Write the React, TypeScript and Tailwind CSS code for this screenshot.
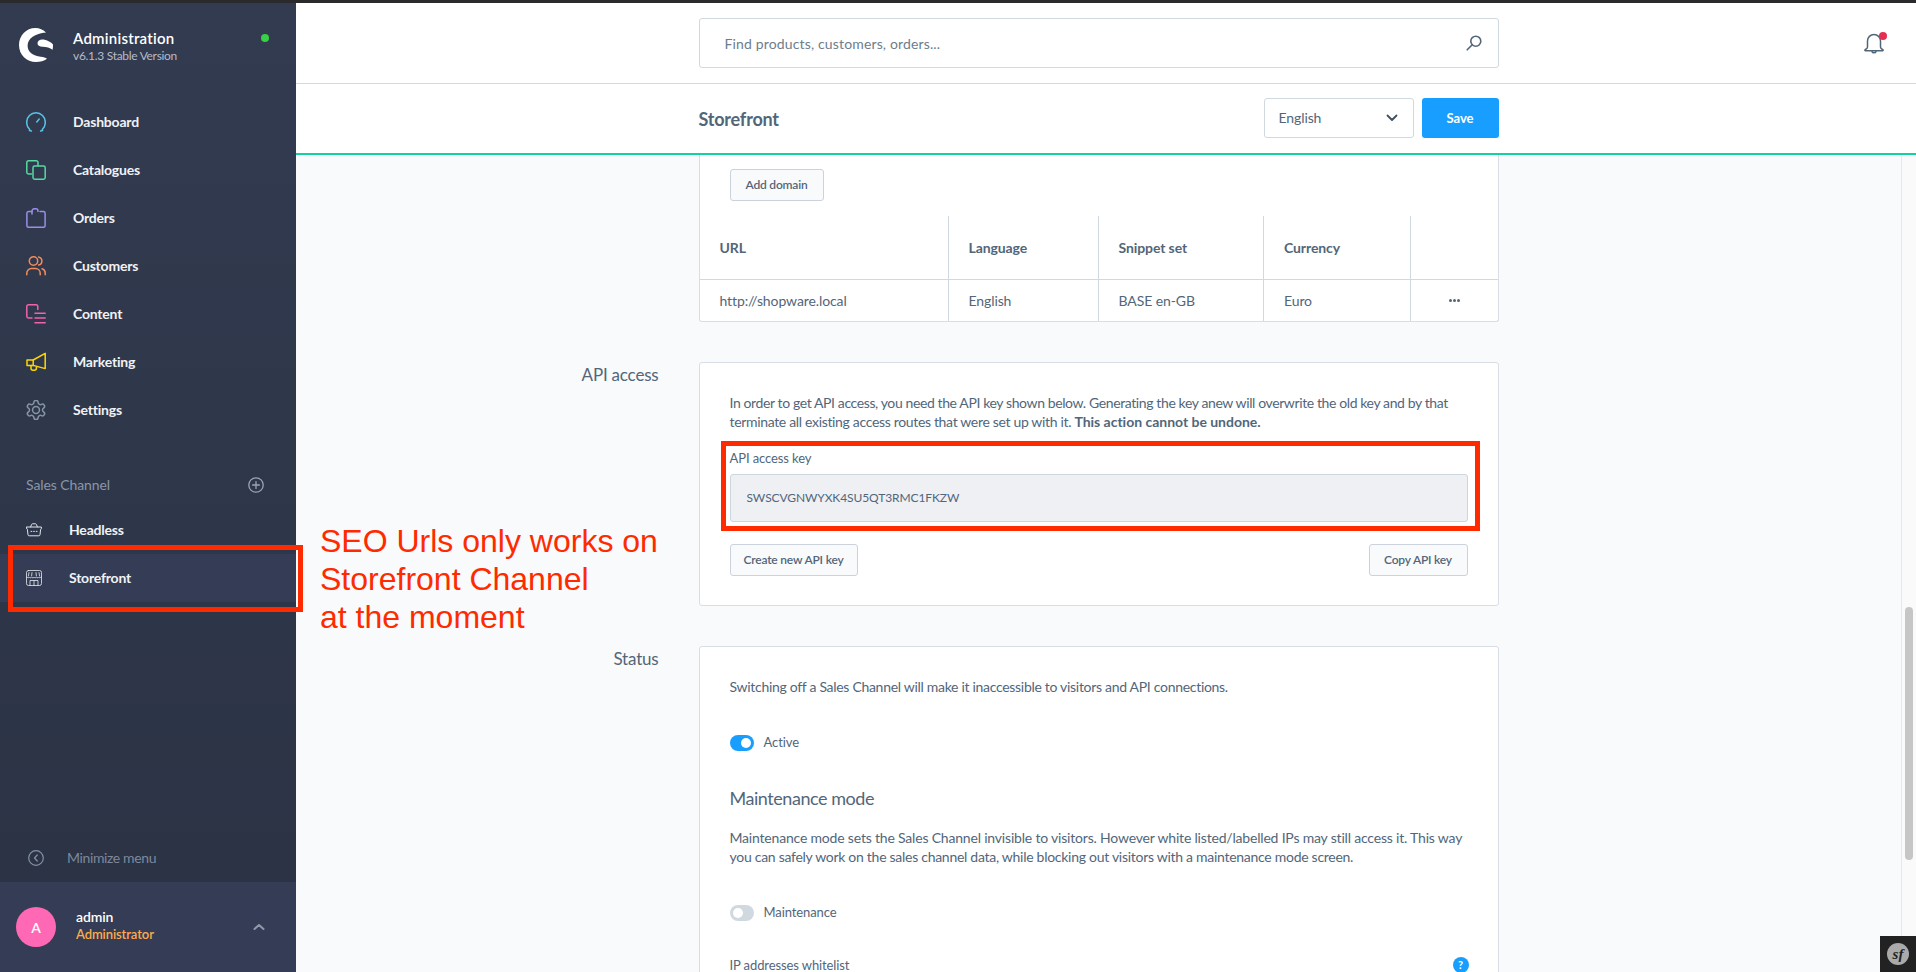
import React from "react";

const FONT = "font-['Lato','Noto_Sans',sans-serif]";

const Logo = () => (
  <svg width="34" height="34" viewBox="0 0 34 34" fill="#ffffff">
    <path d="M27 4.5C24 1.6 20.5 0 16.5 0C7 0 0 7.6 0 17C0 27 7.6 34 17 34C21.2 34 25 33 28 30.8C26.6 29.6 24.6 29.2 21.8 28.8C14 27.6 8.6 24.4 8.6 17.6C8.6 10.4 16 5.4 27 4.5Z" />
    <path d="M18.5 15.2C18.5 12.4 21.6 11 24.6 11.6C28.6 12.4 32.2 14.2 34 16.4C34 18 33.9 20 33.6 21.8C31 19.6 27.4 19.2 23.6 18.8C20.4 18.4 18.5 17.4 18.5 15.2Z" />
  </svg>
);

const stroke = {
  fill: "none",
  strokeWidth: 1.5,
  strokeLinecap: "round" as const,
  strokeLinejoin: "round" as const,
};

const GaugeIcon = () => (
  <svg width="20" height="20" viewBox="0 0 20 20" stroke="#57c4e5" {...stroke}>
    <path d="M3.6 17.4C1.6 15.6.7 13 .7 10.4C.7 5 5 .8 10 .8s9.3 4.2 9.3 9.600c0 2.600-.9 5.200-2.900 7" />
    <path d="M3.400 18.600l2 .4M16.600 18.600l-2 .4M13.200 7l-2.400 3" />
  </svg>
);
const CataloguesIcon = () => (
  <svg width="20" height="20" viewBox="0 0 20 20" stroke="#57d9a3" {...stroke}>
    <path d="M5.500 14H2.500A1.700 1.700 0 0 1 .8 12.300V2.500A1.700 1.700 0 0 1 2.500.8h7.800A1.700 1.700 0 0 1 12 2.500V5.500" />
    <rect x="7" y="6" width="12.200" height="13.200" rx="1.700" />
  </svg>
);
const OrdersIcon = () => (
  <svg width="20" height="20" viewBox="0 0 20 20" stroke="#9a8ee8" {...stroke}>
    <path d="M6 3.500H2.600A1.700 1.700 0 0 0 .9 5.200v12.400a1.700 1.700 0 0 0 1.700 1.700h14.800a1.700 1.700 0 0 0 1.700-1.700V5.200a1.700 1.700 0 0 0-1.700-1.700H14" />
    <path d="M6 6V3a2.200 2.200 0 0 1 2.200-2.200h1.600A2.200 2.200 0 0 1 12 3v.5" />
  </svg>
);
const CustomersIcon = () => (
  <svg width="20" height="20" viewBox="0 0 20 20" stroke="#f58b5b" {...stroke}>
    <circle cx="7.500" cy="5" r="4.200" />
    <path d="M.8 18.800v-1.600a4.600 4.600 0 0 1 4.600-4.600h4.200a4.600 4.600 0 0 1 4.600 4.600v1.600" />
    <path d="M12.600.9a4.200 4.200 0 0 1 0 8.200M16 12.800a4.400 4.400 0 0 1 3.200 4.200v1.800" />
  </svg>
);
const ContentIcon = () => (
  <svg width="20" height="20" viewBox="0 0 20 20" stroke="#f163ab" {...stroke}>
    <path d="M11.800 5.500V2.500A1.700 1.700 0 0 0 10.100.8H2.500A1.700 1.700 0 0 0 .8 2.500v9.800A1.700 1.700 0 0 0 2.500 14H6" />
    <path d="M9 9.200h10.200M9 14h10.200M9 18.800h10.200" />
  </svg>
);
const MarketingIcon = () => (
  <svg width="20" height="20" viewBox="0 0 20 20" stroke="#ffd700" {...stroke}>
    <path d="M19.200 1.400v15.200L7.200 13.400H1V8h6.200z" />
    <path d="M7.200 8v5.400M5 13.600v2.600a2 2 0 0 0 2 2h1.400a2 2 0 0 0 2-2v-1" />
  </svg>
);
const SettingsIcon = () => (
  <svg width="20" height="20" viewBox="1.500 1.500 21 21" stroke="#8794a7" {...stroke} strokeWidth={1.6}>
    <path d="M12.220 2h-.44a2 2 0 0 0-2 2v.18a2 2 0 0 1-1 1.730l-.43.25a2 2 0 0 1-2 0l-.15-.08a2 2 0 0 0-2.730.73l-.22.38a2 2 0 0 0 .73 2.730l.15.1a2 2 0 0 1 1 1.720v.51a2 2 0 0 1-1 1.740l-.15.09a2 2 0 0 0-.73 2.730l.22.38a2 2 0 0 0 2.730.73l.15-.08a2 2 0 0 1 2 0l.43.25a2 2 0 0 1 1 1.730V20a2 2 0 0 0 2 2h.44a2 2 0 0 0 2-2v-.18a2 2 0 0 1 1-1.730l.43-.25a2 2 0 0 1 2 0l.15.08a2 2 0 0 0 2.730-.73l.22-.39a2 2 0 0 0-.73-2.730l-.15-.08a2 2 0 0 1-1-1.740v-.5a2 2 0 0 1 1-1.740l.15-.09a2 2 0 0 0 .73-2.730l-.22-.38a2 2 0 0 0-2.730-.73l-.15.08a2 2 0 0 1-2 0l-.43-.25a2 2 0 0 1-1-1.730V4a2 2 0 0 0-2-2z" />
    <circle cx="12" cy="12" r="3.600" />
  </svg>
);
const BasketIcon = () => (
  <svg width="16" height="16" viewBox="0 0 16 16" stroke="#dfe4ea" {...stroke} strokeWidth={1}>
    <path d="M.6 5h14.800v1.400a1 1 0 0 1-.8 1l-.6 5.400a1.200 1.200 0 0 1-1.200 1H3.200a1.200 1.200 0 0 1-1.200-1l-.6-5.400a1 1 0 0 1-.8-1z" />
    <path d="M4.600 5l1-2.600a1 1 0 0 1 .9-.6h3a1 1 0 0 1 .9.6l1 2.600M5 9.400h.8M7.600 9.400h.8M10.200 9.400h.8" />
  </svg>
);
const StoreIcon = () => (
  <svg width="16" height="16" viewBox="0 0 16 16" stroke="#e6eaef" {...stroke} strokeWidth={0.8}>
    <rect x=".5" y=".5" width="15" height="15" rx="2" />
    <path d="M.8 7c1.200 1 2 1 2.400 0 .5 1 1.900 1 2.400 0 .5 1 1.900 1 2.400 0 .5 1 1.900 1 2.400 0 .5 1 1.900 1 2.400 0 .5 1 1.300 1 2.400 0" />
    <path d="M3 2.600L2.400 6M6 2.600L5.600 6M10 2.600L10.400 6M13 2.600L13.600 6" />
    <path d="M4 15.500V10.500h8v5M8 10.500v5" />
  </svg>
);

const navItems = [
  { label: "Dashboard", icon: <GaugeIcon /> },
  { label: "Catalogues", icon: <CataloguesIcon /> },
  { label: "Orders", icon: <OrdersIcon /> },
  { label: "Customers", icon: <CustomersIcon /> },
  { label: "Content", icon: <ContentIcon /> },
  { label: "Marketing", icon: <MarketingIcon /> },
  { label: "Settings", icon: <SettingsIcon /> },
];

const Sidebar = () => (
  <aside className="w-[296px] shrink-0 flex flex-col bg-gradient-to-b from-[#323b50] to-[#2b3244] text-white">
    <div className="h-[95px] shrink-0 flex items-start pl-[19px] pt-[25px]">
      <Logo />
      <div className="ml-[20px] -mt-[1px]">
        <div className="text-[15px] leading-[22px] font-semibold tracking-[0.25px]">Administration</div>
        <div className="text-[12px] leading-[14px] text-[#b4bcc9] tracking-[-0.3px]">v6.1.3 Stable Version</div>
      </div>
      <span className="ml-[84px] mt-[6px] w-2 h-2 rounded-full bg-[#37d046]" />
    </div>
    <nav className="flex flex-col">
      {navItems.map((item) => (
        <div key={item.label} className="h-12 flex items-center pl-[26px]">
          {item.icon}
          <span className="ml-[27px] pb-[2px] text-[14px] font-bold tracking-[-0.2px] text-[#f0f2f5]">{item.label}</span>
        </div>
      ))}
    </nav>
    <div className="mt-[39px] mb-[9px] h-6 flex items-center justify-between pl-[26px] pr-[32px]">
      <span className="pb-[2px] text-[14px] text-[#8a96a8] tracking-[-0.1px]">Sales Channel</span>
      <svg width="16" height="16" viewBox="0 0 16 16" stroke="#9aa5b5" {...stroke} strokeWidth={1.3}>
        <circle cx="8" cy="8" r="7.200" />
        <path d="M8 4.600v6.800M4.600 8h6.800" />
      </svg>
    </div>
    <div className="h-12 flex items-center pl-[26px]">
      <BasketIcon />
      <span className="ml-[27px] pb-[2px] text-[14px] font-bold tracking-[-0.2px] text-[#f0f2f5]">Headless</span>
    </div>
    <div className="h-12 flex items-center pl-[26px] bg-[#343d55]">
      <StoreIcon />
      <span className="ml-[27px] pb-[2px] text-[14px] font-bold tracking-[-0.2px] text-[#f0f2f5]">Storefront</span>
    </div>
    <div className="flex-1" />
    <div className="h-12 shrink-0 flex items-center pl-[28px]">
      <svg width="16" height="16" viewBox="0 0 16 16" stroke="#8592a5" {...stroke} strokeWidth={1.2}>
        <circle cx="8" cy="8" r="7.300" />
        <path d="M9.300 5L6.500 8l2.800 3" />
      </svg>
      <span className="ml-[23px] pb-[2px] text-[14px] text-[#7c899c] tracking-[-0.38px]">Minimize menu</span>
    </div>
    <div className="h-[90px] shrink-0 flex items-center bg-[#343d55] pl-4 pr-[31px]">
      <div className="w-10 h-10 rounded-full bg-[#ff68b4] flex items-center justify-center text-[14px] font-semibold">A</div>
      <div className="ml-5 flex-1 pb-[3px]">
        <div className="text-[14px] leading-[18px] font-semibold tracking-[-0.1px]">admin</div>
        <div className="text-[13px] leading-[17px] font-semibold text-[#ffab4a] tracking-[-0.1px]">Administrator</div>
      </div>
      <svg width="12" height="8" viewBox="0 0 12 8" stroke="#8e9aac" {...stroke} strokeWidth={2}>
        <path d="M1.500 6L6 2l4.500 4" />
      </svg>
    </div>
  </aside>
);

const OutlineButton = ({ label, className }: { label: string; className: string }) => (
  <button className={`h-8 bg-[#f9fafb] border border-[#cbd2dc] rounded-[3px] text-[12px] font-semibold text-[#52667a] tracking-[-0.2px] ${className}`}>
    {label}
  </button>
);

const Toggle = ({ on, label }: { on: boolean; label: string }) => (
  <div className="flex items-center h-4">
    <span className={`w-6 h-4 rounded-full flex items-center px-[3px] ${on ? "bg-[#189eff] justify-end" : "bg-[#d1d9e0] justify-start"}`}>
      <span className="w-[10px] h-[10px] rounded-full bg-white" />
    </span>
    <span className="ml-[10px] text-[13px] text-[#52667a] tracking-[-0.1px]">{label}</span>
  </div>
);

const domainCols = "grid grid-cols-[249px_150px_165.500px_147px_1fr]";

const DomainCard = () => (
  <div className="bg-white border-x border-b border-[#d9dde5] rounded-b-[3px]">
    <div className="pl-[30px] pt-[14px] pb-[15px]">
      <OutlineButton label="Add domain" className="w-[94px]" />
    </div>
    <div className={`${domainCols} h-[64px] border-b border-[#d1d9e0] text-[14px] font-bold text-[#52667a] tracking-[-0.1px]`}>
      <div className="border-r border-[#d1d9e0] pl-5 flex items-center">URL</div>
      <div className="border-r border-[#d1d9e0] pl-5 flex items-center">Language</div>
      <div className="border-r border-[#d1d9e0] pl-5 flex items-center">Snippet set</div>
      <div className="border-r border-[#d1d9e0] pl-5 flex items-center">Currency</div>
      <div />
    </div>
    <div className={`${domainCols} h-[41px] text-[14px] text-[#52667a] tracking-[-0.1px]`}>
      <div className="border-r border-[#d1d9e0] pl-5 flex items-center">http://shopware.local</div>
      <div className="border-r border-[#d1d9e0] pl-5 flex items-center">English</div>
      <div className="border-r border-[#d1d9e0] pl-5 flex items-center">BASE en-GB</div>
      <div className="border-r border-[#d1d9e0] pl-5 flex items-center">Euro</div>
      <div className="flex items-center justify-center gap-[1px]">
        <span className="w-[3px] h-[3px] rounded-full bg-[#52667a]" />
        <span className="w-[3px] h-[3px] rounded-full bg-[#52667a]" />
        <span className="w-[3px] h-[3px] rounded-full bg-[#52667a]" />
      </div>
    </div>
  </div>
);

const ApiCard = () => (
  <div className="relative bg-white border border-[#d9dde5] rounded-[3px] h-[244px] px-[30px] pt-[30px]">
    <p className="text-[14px] leading-[19px] text-[#52667a] whitespace-nowrap">
      <span className="tracking-[-0.39px]">
        In order to get API access, you need the API key shown below. Generating the key anew will overwrite the old key and by that
      </span>
      <br />
      <span className="tracking-[-0.33px]">terminate all existing access routes that were set up with it. </span>
      <b className="font-bold tracking-[-0.02px]">This action cannot be undone.</b>
    </p>
    <div className="mt-[19px] text-[13px] leading-[16px] text-[#52667a] tracking-[-0.1px]">API access key</div>
    <div className="mt-[8px] h-12 bg-[#eef0f4] border border-[#cdd5de] rounded-[3px] flex items-center pl-4 text-[12px] text-[#52667a] tracking-[-0.1px]">
      SWSCVGNWYXK4SU5QT3RMC1FKZW
    </div>
    <div className="mt-[22px] flex justify-between">
      <OutlineButton label="Create new API key" className="w-[128px]" />
      <OutlineButton label="Copy API key" className="w-[99px]" />
    </div>
    {/* annotation around the key field */}
    <div className="absolute left-[21px] top-[78px] w-[759px] h-[90px] border-[5px] border-[#ff2a00]" />
  </div>
);

const StatusCard = () => (
  <div className="bg-white border border-[#d9dde5] rounded-t-[3px] px-[30px] pt-[30px] pb-10">
    <p className="text-[14px] leading-[19px] text-[#52667a] tracking-[-0.3px]">
      Switching off a Sales Channel will make it inaccessible to visitors and API connections.
    </p>
    <div className="mt-[39px]">
      <Toggle on label="Active" />
    </div>
    <h3 className="mt-[35px] text-[18px] leading-[24px] font-normal text-[#52667a] tracking-[-0.45px]">Maintenance mode</h3>
    <p className="mt-[18px] text-[14px] leading-[19px] text-[#52667a] whitespace-nowrap">
      <span className="tracking-[-0.19px]">
        Maintenance mode sets the Sales Channel invisible to visitors. However white listed/labelled IPs may still access it. This way
      </span>
      <br />
      <span className="tracking-[-0.28px]">
        you can safely work on the sales channel data, while blocking out visitors with a maintenance mode screen.
      </span>
    </p>
    <div className="mt-[39px]">
      <Toggle on={false} label="Maintenance" />
    </div>
    <div className="mt-[35px] flex items-center justify-between text-[13px] leading-[18px] text-[#52667a] tracking-[-0.1px]">
      <span>IP addresses whitelist</span>
      <span className="w-4 h-4 -mr-[1px] rounded-full bg-[#189eff] text-white text-[11px] font-bold flex items-center justify-center">?</span>
    </div>
  </div>
);

const SectionLabel = ({ children }: { children: string }) => (
  <div className="pr-[40px] pt-[2px] text-right text-[17px] leading-[22px] text-[#52667a] tracking-[-0.2px]">{children}</div>
);

const App = () => (
  <div className={`relative h-screen w-full overflow-hidden flex flex-col bg-white ${FONT}`}>
    <div className="h-[3px] shrink-0 bg-[#2a2a2c]" />
    <div className="flex flex-1 min-h-0">
      <Sidebar />
      <main className="flex-1 min-w-0 flex flex-col">
        <header className="h-[81px] shrink-0 border-b border-[#d9d9d9] relative flex items-start justify-center pr-[15px]">
          <div className="mt-[15px] w-[800px] h-[50px] border border-[#d1d9e0] rounded-[3px] flex items-center justify-between pl-[25px] pr-[16px]">
            <span className="text-[14px] text-[#6d7d8e] tracking-[0.15px]">Find products, customers, orders...</span>
            <svg width="16" height="16" viewBox="0 0 16 16" stroke="#52667a" {...stroke} strokeWidth={1.6}>
              <circle cx="9.800" cy="6.200" r="5" />
              <path d="M6.200 9.800L1.200 14.800" />
            </svg>
          </div>
          {/* notification bell */}
          <div className="absolute right-[32px] top-[29px] w-5 h-[23px]">
            <svg width="20" height="23" viewBox="0 0 20 23" stroke="#52667a" {...stroke} strokeWidth={1.5}>
              <path d="M3.500 15V9a6.500 6.500 0 0 1 13 0v6c0 1.500 1.200 2 2.500 2.800a.6.6 0 0 1-.3 1H1.300a.6.6 0 0 1-.3-1C2.300 17 3.500 16.500 3.500 15z" />
              <path d="M8 19.500c.4 1.800 3.600 1.800 4 0" />
            </svg>
            <span className="absolute right-[-3px] top-0 w-2 h-2 rounded-full bg-[#e52e52]" />
          </div>
        </header>
        <div className="h-[71px] shrink-0 border-b-2 border-[#14d1a4] flex justify-center pr-[15px]">
          <div className="w-[800px] flex items-center justify-between pb-[2px]">
            <h1 className="pt-[3px] text-[18px] font-bold text-[#52667a] tracking-[-0.2px]">Storefront</h1>
            <div className="flex gap-[8px]">
              <div className="w-[150px] h-10 border border-[#d1d9e0] rounded-[3px] flex items-center justify-between pl-[14px] pr-[15px] text-[14px] text-[#52667a] tracking-[-0.1px]">
                English
                <svg width="12" height="8" viewBox="0 0 12 8" stroke="#3f4f60" {...stroke} strokeWidth={1.8}>
                  <path d="M1.500 1.500L6 6l4.500-4.500" />
                </svg>
              </div>
              <button className="w-[77px] h-10 bg-[#189eff] rounded-[3px] pt-[2px] text-[13px] font-bold text-white">Save</button>
            </div>
          </div>
        </div>
        <div className="flex-1 min-h-0 flex bg-[#f9fafb]">
          <div className="flex-1 min-w-0 overflow-hidden">
            <div className="grid grid-cols-[1fr_800px_1fr] gap-y-[40px]">
              <div />
              <DomainCard />
              <div />
              <SectionLabel>API access</SectionLabel>
              <ApiCard />
              <div />
              <SectionLabel>Status</SectionLabel>
              <StatusCard />
              <div />
            </div>
          </div>
          {/* scrollbar */}
          <div className="w-[15px] shrink-0 border-l border-[#e8e8e8] bg-[#fafafa] pl-[3px] pt-[452px]">
            <div className="w-2 h-[253px] rounded-full bg-[#c6c6c6]" />
          </div>
        </div>
      </main>
    </div>

    {/* red annotation over the page */}
    <div className="absolute left-[8px] top-[545px] w-[295px] h-[67px] border-[5px] border-[#ff2a00]" />
    <div className="absolute left-[320px] top-[522px] font-['Liberation_Sans',sans-serif] text-[32px] leading-[38px] text-[#ff2a00] whitespace-nowrap">
      SEO Urls only works on
      <br />
      Storefront Channel
      <br />
      at the moment
    </div>

    {/* symfony toolbar */}
    <div className="absolute right-0 bottom-0 w-9 h-9 bg-[#222222] flex items-center justify-center">
      <span className="w-[22px] h-[22px] rounded-full bg-[#aaaaaa] flex items-center justify-center font-['Liberation_Serif',serif] italic font-bold text-[15px] text-[#222222]">
        sf
      </span>
    </div>
  </div>
);

export default App;
